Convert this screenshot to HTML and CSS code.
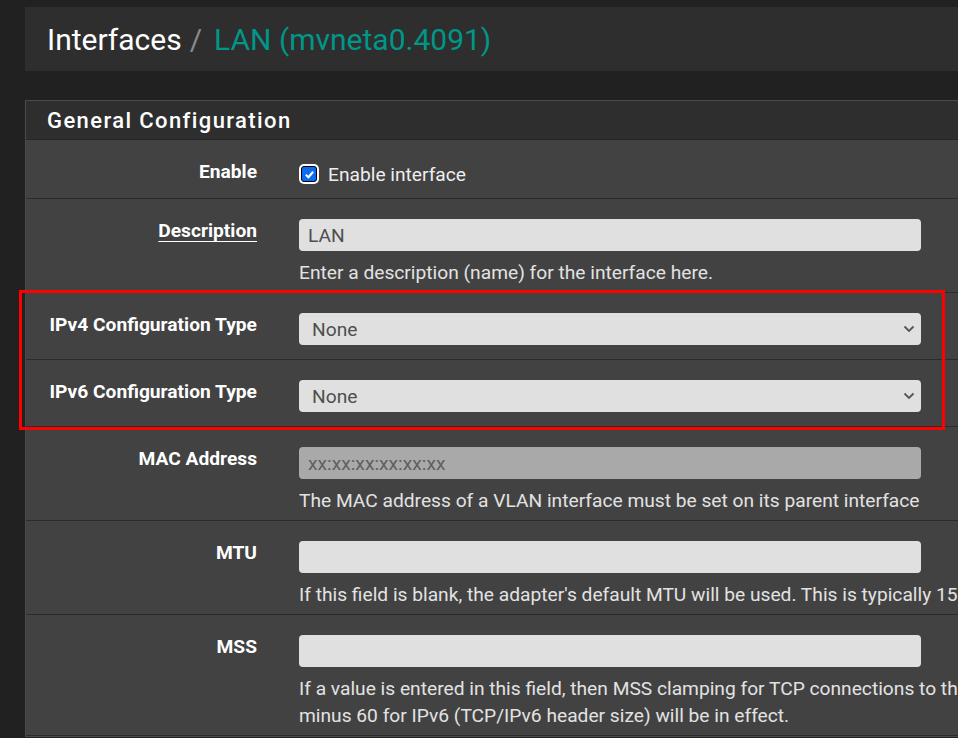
FILE: index.html
```html
<!DOCTYPE html>
<html lang="en">
<head>
<meta charset="utf-8">
<title>Interfaces / LAN</title>
<link rel="stylesheet" href="styles.css">
</head>
<body>
<div class="page">
  <header class="page-header">
    <h1 class="breadcrumb">
      <span class="crumb">Interfaces</span><span class="sep">/</span><span class="current">LAN (mvneta0.4091)</span>
    </h1>
  </header>

  <section class="panel">
    <h2 class="panel-heading">General Configuration</h2>
    <div class="panel-body">
      <div class="row">
        <div class="label">Enable</div>
        <div class="field">
          <label class="check">
            <span class="box"><svg viewBox="0 0 12 12" width="11" height="11"><path d="M2 6.3 L4.8 9 L10 3" fill="none" stroke="#fff" stroke-width="2.2"/></svg></span>
            Enable interface
          </label>
        </div>
      </div>

      <div class="row">
        <div class="label"><span class="abbr">Description</span></div>
        <div class="field">
          <input class="input" type="text" value="LAN">
          <p class="help">Enter a description (name) for the interface here.</p>
        </div>
      </div>

      <div class="row">
        <div class="label">IPv4 Configuration Type</div>
        <div class="field">
          <div class="select-wrap">
            <select class="input select"><option>None</option></select>
            <svg class="chevron" viewBox="0 0 12 8" width="12" height="8"><path d="M1.5 1.5 L6 6 L10.5 1.5" fill="none" stroke="#555" stroke-width="1.8"/></svg>
          </div>
        </div>
      </div>

      <div class="row">
        <div class="label">IPv6 Configuration Type</div>
        <div class="field">
          <div class="select-wrap">
            <select class="input select"><option>None</option></select>
            <svg class="chevron" viewBox="0 0 12 8" width="12" height="8"><path d="M1.5 1.5 L6 6 L10.5 1.5" fill="none" stroke="#555" stroke-width="1.8"/></svg>
          </div>
        </div>
      </div>

      <div class="row">
        <div class="label">MAC Address</div>
        <div class="field">
          <input class="input input-disabled" type="text" placeholder="xx:xx:xx:xx:xx:xx" disabled>
          <p class="help">The MAC address of a VLAN interface must be set on its parent interface</p>
        </div>
      </div>

      <div class="row">
        <div class="label">MTU</div>
        <div class="field">
          <input class="input" type="text">
          <p class="help">If this field is blank, the adapter's default MTU will be used. This is typically 1500 bytes but can vary in some circumstances.</p>
        </div>
      </div>

      <div class="row">
        <div class="label">MSS</div>
        <div class="field">
          <input class="input" type="text">
          <p class="help">If a value is entered in this field, then MSS clamping for TCP connections to the value entered above minus 40 for IPv4 (TCP/IPv4 header size) and<br>minus 60 for IPv6 (TCP/IPv6 header size) will be in effect.</p>
        </div>
      </div>
    </div>
    <div class="highlight"></div>
  </section>
</div>
</body>
</html>
```

FILE: styles.css
```css
html, body {
  margin: 0;
  padding: 0;
}
body {
  background: #212121;
  font-family: Roboto, "Liberation Sans", sans-serif;
  overflow: hidden;
  width: 958px;
  height: 738px;
}
.page {
  padding: 7px 0 0 25px;
  width: 1500px;
}
.page-header {
  height: 64px;
  background: #2e2e2e;
  display: flex;
  align-items: center;
  padding-left: 22px;
}
.breadcrumb {
  margin: 0;
  font-size: 30px;
  font-weight: 400;
  color: #fff;
  display: flex;
  align-items: baseline;
}
.sep {
  color: #8a8a8a;
  margin: 0 12px 0 8px;
}
.current {
  color: #009688;
}
.panel {
  position: relative;
  margin-top: 29px;
  background: #424242;
  border: 1px solid #4a4a4a;
  border-right: none;
}
.panel-heading {
  margin: 0;
  height: 38px;
  background: #2e2e2e;
  border-bottom: 1px solid #262626;
  display: flex;
  align-items: center;
  padding-left: 21px;
  color: #fff;
  font-size: 22px;
  font-weight: 500;
  letter-spacing: 1.4px;
}
.row {
  display: grid;
  grid-template-columns: 231px 1300px;
  column-gap: 42px;
  padding: 20px 0 6px;
  border-bottom: 1px solid #2b2b2b;
}
.label {
  text-align: right;
  color: #fff;
  font-weight: 700;
  font-size: 19.2px;
  line-height: 24px;
}
.abbr {
  text-decoration: underline;
  text-underline-offset: 4px;
  text-decoration-thickness: 1px;
}
.field {
  min-width: 0;
}
.check {
  display: flex;
  align-items: center;
  height: 28px;
  margin-bottom: 4px;
  color: #eee;
  font-size: 19.2px;
}
.box {
  width: 14px;
  height: 14px;
  border: 1px solid #000;
  border-radius: 3px;
  background: #0a6cf5;
  box-shadow: 0 0 0 2px #fff;
  margin: 0 11px 0 2px;
  display: flex;
  align-items: center;
  justify-content: center;
}
.input {
  display: block;
  box-sizing: border-box;
  width: 622px;
  height: 32px;
  margin: 0 0 8px;
  border: none;
  border-radius: 4px;
  background: #e0e0e0;
  color: #4e4e4e;
  font-family: Roboto, "Liberation Sans", sans-serif;
  font-size: 19.2px;
  padding: 0 9px;
  outline: none;
}
.input-disabled {
  background: #a9a9a9;
}
.input-disabled::placeholder {
  color: #5f5f5f;
}
.select-wrap {
  position: relative;
  width: 622px;
}
.select {
  appearance: none;
  -webkit-appearance: none;
  padding-left: 13px;
}
.chevron {
  position: absolute;
  right: 6px;
  top: 12px;
}
.help {
  margin: 0;
  line-height: 27px;
  color: #e2e2e2;
  font-size: 19.2px;
  white-space: nowrap;
}
.highlight {
  position: absolute;
  left: -7px;
  top: 189px;
  width: 920px;
  height: 134px;
  border: 3px solid #f00;
  pointer-events: none;
}
```
